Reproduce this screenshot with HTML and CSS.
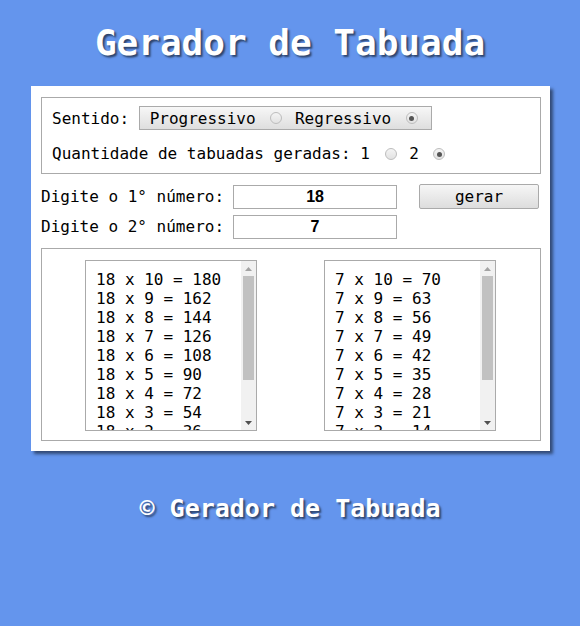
FILE: index.html
```html
<!DOCTYPE html>
<html lang="pt">
<head>
<meta charset="utf-8">
<title>Gerador de Tabuada</title>
<link rel="stylesheet" href="styles.css">
</head>
<body>
<h1 class="title">Gerador de Tabuada</h1>
<main class="panel">
  <div class="box options">
    <div class="opt-row">
      <span>Sentido:</span>
      <span class="toggle">Progressivo <input type="radio" name="sentido" class="radio"> Regressivo <input type="radio" name="sentido" class="radio" checked></span>
    </div>
    <div class="opt-row qty">Quantidade de tabuadas geradas: 1 <input type="radio" name="qtd" class="radio"> 2 <input type="radio" name="qtd" class="radio" checked></div>
  </div>
  <div class="inputs">
    <div class="in-row">
      <label class="lbl"><span>Digite o 1° número:</span><input class="num" type="text" value="18"></label>
      <button class="btn">gerar</button>
    </div>
    <div class="in-row">
      <label class="lbl"><span>Digite o 2° número:</span><input class="num" type="text" value="7"></label>
    </div>
  </div>
  <div class="box results">
    <div class="out-wrap">
      <textarea class="out" readonly>18 x 10 = 180
18 x 9 = 162
18 x 8 = 144
18 x 7 = 126
18 x 6 = 108
18 x 5 = 90
18 x 4 = 72
18 x 3 = 54
18 x 2 = 36
18 x 1 = 18
18 x 0 = 0</textarea>
      <div class="sb" aria-hidden="true">
        <span class="sb-btn"><svg width="7" height="4" viewBox="0 0 7 4"><path d="M0 4L3.5 0L7 4z" fill="#a3a3a3"/></svg></span>
        <span class="sb-track"><span class="sb-thumb"></span></span>
        <span class="sb-btn"><svg width="7" height="4" viewBox="0 0 7 4"><path d="M0 0L7 0L3.5 4z" fill="#505050"/></svg></span>
      </div>
    </div>
    <div class="out-wrap">
      <textarea class="out" readonly>7 x 10 = 70
7 x 9 = 63
7 x 8 = 56
7 x 7 = 49
7 x 6 = 42
7 x 5 = 35
7 x 4 = 28
7 x 3 = 21
7 x 2 = 14
7 x 1 = 7
7 x 0 = 0</textarea>
      <div class="sb" aria-hidden="true">
        <span class="sb-btn"><svg width="7" height="4" viewBox="0 0 7 4"><path d="M0 4L3.5 0L7 4z" fill="#a3a3a3"/></svg></span>
        <span class="sb-track"><span class="sb-thumb"></span></span>
        <span class="sb-btn"><svg width="7" height="4" viewBox="0 0 7 4"><path d="M0 0L7 0L3.5 4z" fill="#505050"/></svg></span>
      </div>
    </div>
  </div>
</main>
<footer class="foot">© Gerador de Tabuada</footer>
</body>
</html>
```
FILE: styles.css
```css
* { box-sizing: border-box; }
html, body { margin: 0; padding: 0; }
body {
  background: #6495ed;
  font-family: "DejaVu Sans Mono", monospace;
  font-size: 16px;
  color: #000;
  height: 626px;
  overflow: hidden;
}
.title {
  margin: 22px 0 22px;
  font-size: 36px;
  line-height: 42px;
  font-weight: bold;
  color: #fff;
  text-align: center;
  text-shadow: 2px 2px 2px rgba(0, 0, 0, 0.55);
}
.panel {
  display: flex;
  flex-direction: column;
  width: 519px;
  margin-left: 31px;
  padding: 11px 9px 10px 10px;
  background: #fff;
  box-shadow: 3px 3px 3px rgba(0, 0, 0, 0.5);
}
.box {
  border: 1px solid #aaa;
}
.options {
  height: 77px;
  padding: 8px 10px 0;
  display: flex;
  flex-direction: column;
  gap: 14px;
}
.opt-row {
  display: flex;
  align-items: center;
  gap: 9.6px;
  height: 24px;
  white-space: pre;
}
.opt-row.qty {
  display: block;
  height: 19px;
  line-height: 19px;
}
.toggle {
  display: inline-flex;
  align-items: center;
  height: 24px;
  padding: 0 10px;
  border: 1px solid #aaa;
  background: linear-gradient(#f7f7f7, #dedede);
  white-space: pre;
}
.radio {
  -webkit-appearance: none;
  appearance: none;
  width: 12px;
  height: 12px;
  margin: 0 3px 0 5px;
  border: 1px solid #bdbdbd;
  border-radius: 50%;
  background: linear-gradient(#f4f4f4, #e2e2e2);
  vertical-align: -1px;
  position: relative;
}
.radio:checked::after {
  content: "";
  position: absolute;
  left: 2.5px;
  top: 2.5px;
  width: 5px;
  height: 5px;
  border-radius: 50%;
  background: #555;
}
.inputs {
  margin-top: 10px;
  display: flex;
  flex-direction: column;
  gap: 5px;
}
.in-row {
  display: flex;
  justify-content: space-between;
  align-items: flex-start;
  height: 25px;
  padding-right: 2px;
}
.lbl {
  white-space: pre;
  display: flex;
  align-items: center;
  gap: 9px;
  height: 25px;
}
.num {
  width: 164px;
  height: 24px;
  margin: 1px 0 0;
  padding: 0 4px;
  border: 1px solid #aaa;
  font-family: "Liberation Sans", Arial, sans-serif;
  font-weight: bold;
  font-size: 16px;
  text-align: center;
  color: #000;
  background: #fff;
}
.btn {
  width: 120px;
  height: 25px;
  padding: 0;
  border: 1px solid #aaa;
  border-radius: 2px;
  background: linear-gradient(#f6f6f6, #dddddd);
  font-family: "DejaVu Sans Mono", monospace;
  font-size: 16px;
  color: #000;
}
.results {
  margin-top: 9px;
  height: 193px;
  padding: 11px 0 0 43px;
  display: flex;
  gap: 67px;
}
.out-wrap {
  position: relative;
  width: 172px;
  height: 171px;
}
.out {
  display: block;
  width: 172px;
  height: 171px;
  margin: 0;
  padding: 9px 16px 10px 10px;
  border: 1px solid #aaa;
  resize: none;
  overflow: hidden;
  font-family: "DejaVu Sans Mono", monospace;
  font-size: 16px;
  line-height: 19px;
  color: #000;
  background: #fff;
}
.sb {
  position: absolute;
  top: 1px;
  right: 1px;
  bottom: 1px;
  width: 15px;
  display: flex;
  flex-direction: column;
  background: #f1f1f1;
}
.sb-btn {
  height: 15px;
  display: flex;
  align-items: center;
  justify-content: center;
  flex: none;
}
.sb-track {
  flex: 1;
  padding: 0 2px;
}
.sb-thumb {
  display: block;
  height: 104px;
  background: #c1c1c1;
}
.foot {
  margin-top: 43px;
  font-size: 25px;
  line-height: 29px;
  font-weight: bold;
  color: #fff;
  text-align: center;
  text-shadow: 2px 2px 2px rgba(0, 0, 0, 0.55);
}
```
